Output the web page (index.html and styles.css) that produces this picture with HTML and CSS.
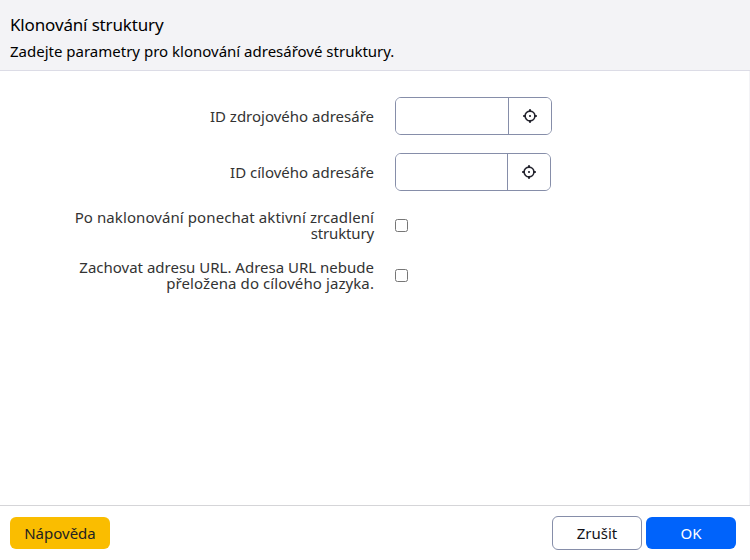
FILE: index.html
```html
<!DOCTYPE html>
<html lang="cs">
<head>
<meta charset="utf-8">
<title>Klonování struktury</title>
<link rel="stylesheet" href="styles.css">
</head>
<body>
<div class="dialog">
  <header class="header">
    <h1 class="title">Klonování struktury</h1>
    <p class="subtitle">Zadejte parametry pro klonování adresářové struktury.</p>
  </header>
  <main class="form">
    <div class="row row-input">
      <label class="label" for="src">ID zdrojového adresáře</label>
      <div class="group">
        <input class="field" id="src" type="text">
        <button class="pick" type="button" aria-label="Vybrat">
          <svg width="16" height="16" viewBox="0 0 16 16" fill="none" stroke="currentColor"><circle cx="8" cy="8" r="4.9" stroke-width="1.6"/><path d="M8 1.2v2.2M8 12.6v2.2M1.2 8h2.2M12.6 8h2.2" stroke-width="2"/><circle cx="8" cy="8" r="1.1" fill="currentColor" stroke="none"/></svg>
        </button>
      </div>
    </div>
    <div class="row row-input">
      <label class="label" for="dst">ID cílového adresáře</label>
      <div class="group group-narrow">
        <input class="field" id="dst" type="text">
        <button class="pick" type="button" aria-label="Vybrat">
          <svg width="16" height="16" viewBox="0 0 16 16" fill="none" stroke="currentColor"><circle cx="8" cy="8" r="4.9" stroke-width="1.6"/><path d="M8 1.2v2.2M8 12.6v2.2M1.2 8h2.2M12.6 8h2.2" stroke-width="2"/><circle cx="8" cy="8" r="1.1" fill="currentColor" stroke="none"/></svg>
        </button>
      </div>
    </div>
    <div class="row row-check">
      <label class="label" for="mirror"><span class="wide">Po naklonování ponechat aktivní zrcadlení</span><br><span class="tight">struktury</span></label>
      <input class="check" id="mirror" type="checkbox">
    </div>
    <div class="row row-check">
      <label class="label" for="url">Zachovat adresu URL. Adresa URL nebude<br><span class="wide">přeložena do cílového jazyka.</span></label>
      <input class="check" id="url" type="checkbox">
    </div>
  </main>
  <footer class="footer">
    <button class="btn btn-help" type="button">Nápověda</button>
    <button class="btn btn-cancel" type="button">Zrušit</button>
    <button class="btn btn-ok" type="button">OK</button>
  </footer>
</div>
</body>
</html>
```
FILE: styles.css
```css
* { box-sizing: border-box; }
body { margin: 0; font-family: "Noto Sans", sans-serif; font-size: 15px; color: #333; background: #fff; }
.dialog { display: flex; flex-direction: column; height: 560px; }
.header { height: 71px; padding: 11px 10px 0; background: #f3f3f6; border-bottom: 1px solid #dcdce6; color: #000; white-space: nowrap; }
.title { margin: 0; font-size: 17px; font-weight: 400; line-height: 28px; letter-spacing: -0.15px; }
.subtitle { margin: 0; line-height: 25px; }
.form { flex: 1; display: flex; flex-direction: column; padding-top: 26px; border-right: 1px solid #f3f3f6; }
.row { display: flex; align-items: center; gap: 21px; }
.row-input { height: 38px; margin-bottom: 18px; }
.row-check { height: 32px; margin-bottom: 18px; }
.label { width: 374px; text-align: right; line-height: 16px; white-space: nowrap; }
.wide { letter-spacing: 0.09px; }
.tight { letter-spacing: -0.15px; }
.group { display: flex; width: 157px; height: 38px; border: 1px solid #868ea9; border-radius: 6px; overflow: hidden; }
.group-narrow { width: 156px; }
.field { flex: 1; min-width: 0; border: 0; padding: 0 12px; outline: 0; background: #fff; }
.pick { display: flex; align-items: center; justify-content: center; width: 43px; padding: 0; border: 0; border-left: 1px solid #868ea9; background: #fff; color: #23232d; }
.check { width: 13px; height: 13px; margin: 0; }
.footer { display: flex; align-items: center; height: 55px; padding: 0 14px 0 10px; border-top: 1px solid #d5d5d8; }
.btn { height: 32px; padding: 0; border: 0; border-radius: 6px; font: inherit; }
.btn-help { width: 100px; margin-right: auto; background: #fabd00; color: #222; }
.btn-cancel { width: 90px; height: 34px; margin-right: 4px; border: 1px solid #868ea9; background: #fff; color: #13131a; }
.btn-ok { width: 90px; background: #0063fb; color: #fff; }
```
